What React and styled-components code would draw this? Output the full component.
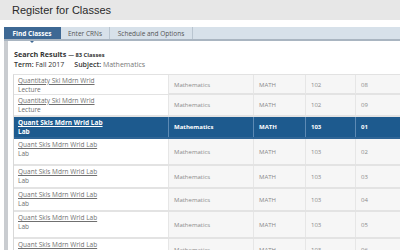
import React from 'react';
import styled, { createGlobalStyle } from 'styled-components';

const Global = createGlobalStyle`
  html, body {
    margin: 0;
    padding: 0;
    background: #ffffff;
    overflow: hidden;
  }
  body {
    font-family: "Open Sans", "Liberation Sans", sans-serif;
  }
`;

const Page = styled.div`
  width: 400px;
  height: 250px;
  overflow: hidden;
`;

const Header = styled.header`
  height: 20px;
  background: #e7e7e7;
  display: flex;
  align-items: center;
  padding-left: 12px;
  font-family: "Liberation Sans", Arial, sans-serif;
  font-size: 11px;
  color: #2a2a2a;
  margin-bottom: 7px;
`;

const TabBar = styled.nav`
  margin-left: 4px;
  height: 12px;
  background: #d7e1ea;
  border-bottom: 2px solid #a9b5c1;
  display: flex;
`;

const Tab = styled.div`
  position: relative;
  width: ${(p) => p.$w}px;
  display: flex;
  align-items: center;
  justify-content: center;
  font-size: 6.5px;
  color: ${(p) => (p.$active ? '#fff' : '#555')};
  font-weight: ${(p) => (p.$active ? 700 : 400)};
  background: ${(p) => (p.$active ? '#3d6894' : 'transparent')};
  border-right: 1px solid ${(p) => (p.$active ? '#3d6894' : '#b9c5d0')};
  &::after {
    content: '';
    display: ${(p) => (p.$active ? 'block' : 'none')};
    position: absolute;
    left: 50%;
    bottom: -4px;
    margin-left: -2px;
    border-left: 2px solid transparent;
    border-right: 2px solid transparent;
    border-top: 2px solid #3d6894;
  }
`;

const Panel = styled.section`
  margin-left: 4px;
  border-left: 4px solid #c9ccd0;
  padding: 8px 0 0 5px;
  height: 300px;
`;

const Summary = styled.div`
  padding-left: 1px;
  color: #333;
  margin-bottom: 5px;
`;

const Title = styled.div`
  font-size: 7.2px;
  font-weight: 700;
  line-height: 10px;
  span {
    font-size: 5.8px;
  }
`;

const Meta = styled.div`
  font-size: 7px;
  line-height: 9px;
  b {
    font-weight: 600;
  }
  span {
    margin-left: 10px;
  }
  em {
    font-style: normal;
    color: #777;
  }
`;

const Table = styled.div`
  border-top: 1px solid #e2e2e2;
  border-left: 1px solid #d8d8d8;
  width: 420px;
`;

const Row = styled.div`
  display: grid;
  grid-template-columns: 154px 85px 52px 50px 1fr;
  height: ${(p) => p.$h}px;
  border-bottom: 2px solid ${(p) => (p.$sel ? '#2f6596' : '#e3e3e3')};
  background: ${(p) => (p.$sel ? '#1d5a8e' : '#f6f6f6')};
  color: ${(p) => (p.$sel ? '#fff' : '#8a8a8a')};
  font-weight: ${(p) => (p.$sel ? 700 : 400)};
`;

const NameCell = styled.div`
  background: ${(p) => (p.$sel ? '#1d5a8e' : '#fff')};
  padding: 1px 0 0 4px;
  font-size: 6.5px;
  line-height: 9px;
  color: ${(p) => (p.$sel ? '#fff' : '#707070')};
  a {
    color: inherit;
    text-decoration: underline;
    display: block;
  }
`;

const Cell = styled.div`
  display: flex;
  align-items: center;
  padding-left: 5px;
  font-size: 6px;
  border-left: 1px solid ${(p) => (p.$sel ? '#5d8ab4' : '#e6e6e6')};
`;

const rows = [
  { name: 'Quantitaty Skl Mdrn Wrld', type: 'Lecture', num: '102', sec: '08', h: 18 },
  { name: 'Quantitaty Skl Mdrn Wrld', type: 'Lecture', num: '102', sec: '09', h: 20 },
  { name: 'Quant Skls Mdrn Wrld Lab', type: 'Lab', num: '103', sec: '01', h: 20, sel: true },
  { name: 'Quant Skls Mdrn Wrld Lab', type: 'Lab', num: '103', sec: '02', h: 25 },
  { name: 'Quant Skls Mdrn Wrld Lab', type: 'Lab', num: '103', sec: '03', h: 21 },
  { name: 'Quant Skls Mdrn Wrld Lab', type: 'Lab', num: '103', sec: '04', h: 21 },
  { name: 'Quant Skls Mdrn Wrld Lab', type: 'Lab', num: '103', sec: '05', h: 25 },
  { name: 'Quant Skls Mdrn Wrld Lab', type: 'Lab', num: '103', sec: '06', h: 22 },
];

export default function App() {
  return (
    <Page>
      <Global />
      <Header>Register for Classes</Header>
      <TabBar>
        <Tab $w={56} $active>Find Classes</Tab>
        <Tab $w={48}>Enter CRNs</Tab>
        <Tab $w={82}>Schedule and Options</Tab>
      </TabBar>
      <Panel>
        <Summary>
          <Title>
            Search Results <span>— 83 Classes</span>
          </Title>
          <Meta>
            <b>Term:</b> Fall 2017
            <span>
              <b>Subject:</b> <em>Mathematics</em>
            </span>
          </Meta>
        </Summary>
        <Table>
          {rows.map((r, i) => (
            <Row key={i} $h={r.h} $sel={r.sel}>
              <NameCell $sel={r.sel}>
                <a>{r.name}</a>
                {r.type}
              </NameCell>
              <Cell $sel={r.sel}>Mathematics</Cell>
              <Cell $sel={r.sel}>MATH</Cell>
              <Cell $sel={r.sel}>{r.num}</Cell>
              <Cell $sel={r.sel}>{r.sec}</Cell>
            </Row>
          ))}
        </Table>
      </Panel>
    </Page>
  );
}
